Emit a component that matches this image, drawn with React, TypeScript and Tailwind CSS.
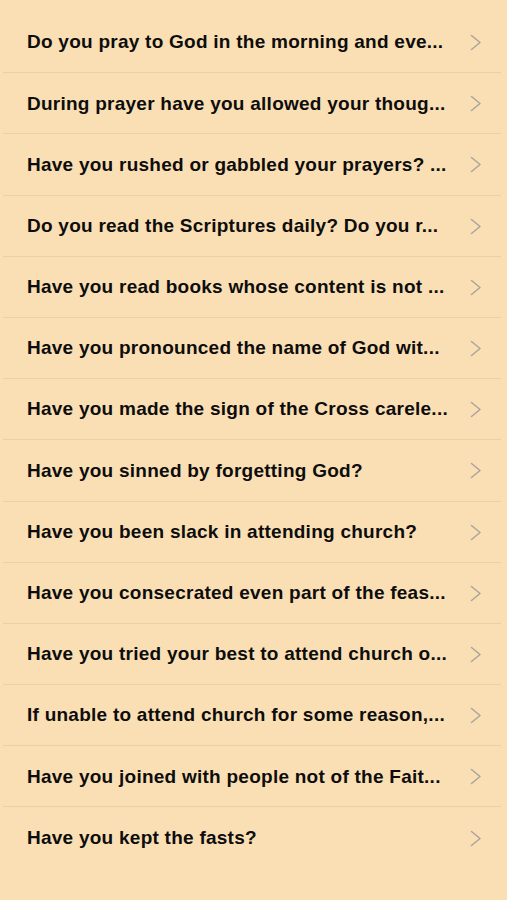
import React from "react";

const items = [
  "Do you pray to God in the morning and eve...",
  "During prayer have you allowed your thoug...",
  "Have you rushed or gabbled your prayers? ...",
  "Do you read the Scriptures daily? Do you r...",
  "Have you read books whose content is not ...",
  "Have you pronounced the name of God wit...",
  "Have you made the sign of the Cross carele...",
  "Have you sinned by forgetting God?",
  "Have you been slack in attending church?",
  "Have you consecrated even part of the feas...",
  "Have you tried your best to attend church o...",
  "If unable to attend church for some reason,...",
  "Have you joined with people not of the Fait...",
  "Have you kept the fasts?",
];

function Chevron() {
  return (
    <svg width="12" height="17" viewBox="0 0 12 17" className="shrink-0">
      <path d="M1.5 1.5 L10 8.5 L1.5 15.5" fill="none" stroke="#aaa59d" strokeWidth="1.6" strokeLinecap="round" strokeLinejoin="round" />
    </svg>
  );
}

export default function App() {
  return (
    <div className="w-[507px] h-[900px] bg-[#fbdfb4] pt-3" style={{ fontFamily: '"Liberation Sans", Arial, sans-serif' }}>
      {items.map((t, i) => (
        <div key={i} className="flex flex-col">
          <div className="h-[61.2px] flex items-center pl-[27px] pr-[25px]">
            <div className="whitespace-nowrap font-bold text-[19px] tracking-[0.25px] text-[#0d0d0d]">{t}</div>
            <div className="ml-auto flex items-center">
              <Chevron />
            </div>
          </div>
          {i < items.length - 1 && <div className="h-px bg-[#eccfa7] ml-[3px] mr-[6px] -mt-px" />}
        </div>
      ))}
    </div>
  );
}
